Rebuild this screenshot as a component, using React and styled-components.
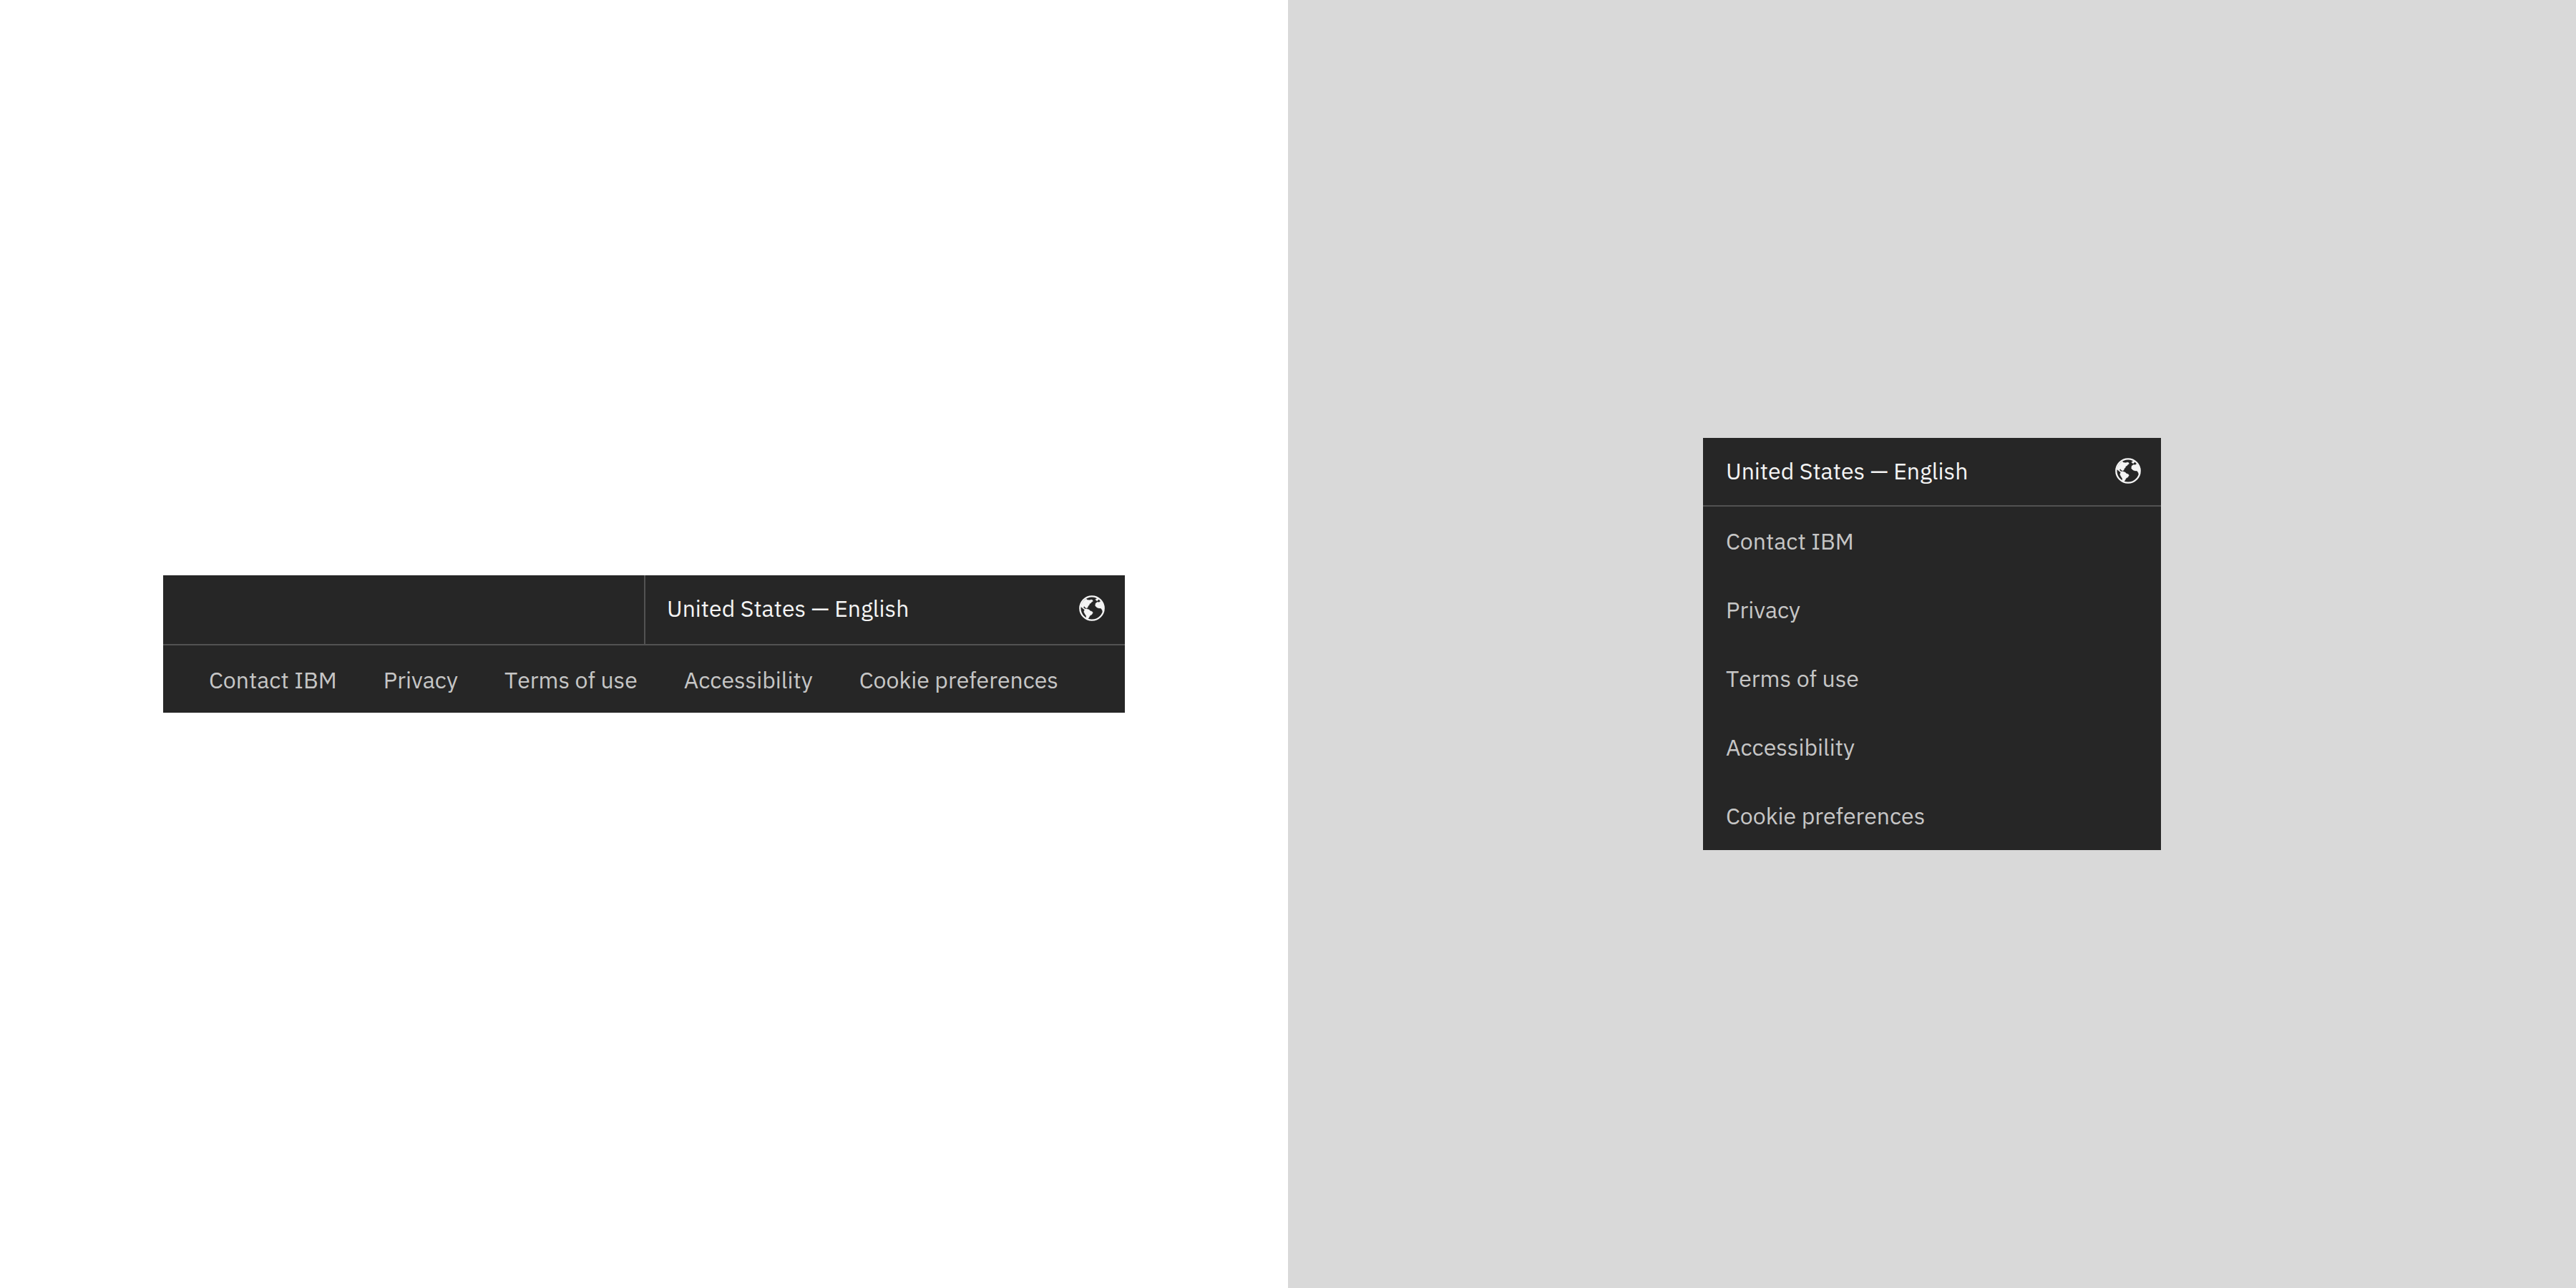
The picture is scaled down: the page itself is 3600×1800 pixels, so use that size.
import React from "react";
import styled, { createGlobalStyle } from "styled-components";

const GlobalStyle = createGlobalStyle`
  *, *::before, *::after { box-sizing: border-box; }
  body {
    margin: 0;
    font-family: "IBM Plex Sans", Roboto, sans-serif;
    font-size: 32px;
    line-height: 38px;
    font-kerning: none;
  }
`;

const Page = styled.main`
  display: grid;
  grid-template-columns: 1fr 1fr;
  min-height: 100vh;
`;

const Stage = styled.section`
  display: flex;
  align-items: center;
  justify-content: center;
  background: ${(p) => (p.$shaded ? "#d9d9d9" : "#ffffff")};
`;

const Footer = styled.footer`
  width: 100%;
  max-width: ${(p) => p.$maxWidth};
  background: #262626;
`;

const LocaleBar = styled.div`
  display: grid;
  grid-template-columns: ${(p) => (p.$split ? "1fr 1fr" : "1fr")};
  border-bottom: 2px solid #525252;
`;

const LocaleCell = styled.div`
  grid-column: -2 / -1;
  ${(p) => p.$divided && "border-left: 2px solid #525252;"}
`;

const LocaleButton = styled.button`
  display: flex;
  align-items: center;
  justify-content: space-between;
  width: 100%;
  height: ${(p) => (p.$tall ? "96px" : "94px")};
  padding: ${(p) => (p.$tall ? "0 28px 4px 30px" : "0 28px 2px 32px")};
  border: 0;
  background: transparent;
  color: #f4f4f4;
  font: inherit;
  font-kerning: none;
  text-align: left;
  cursor: pointer;
`;

const GlobeIcon = styled.svg`
  flex: none;
  width: 36px;
  height: 36px;
`;

const LinkList = styled.ul`
  display: flex;
  flex-direction: ${(p) => (p.$inline ? "row" : "column")};
  gap: ${(p) => (p.$inline ? "0 65px" : "0")};
  margin: 0;
  padding: ${(p) => (p.$inline ? "0 64px" : "0 32px")};
  list-style: none;
`;

const LegalLink = styled.a`
  display: block;
  padding: ${(p) => (p.$inline ? "29px 0 27px" : "29px 0")};
  color: #c6c6c6;
  text-decoration: none;
  white-space: nowrap;
`;

const links = ["Contact IBM", "Privacy", "Terms of use", "Accessibility", "Cookie preferences"];

function Globe() {
  return (
    <GlobeIcon viewBox="0 0 108 108" aria-hidden="true">
      <circle cx="54" cy="54" r="50" fill="none" stroke="#f4f4f4" strokeWidth="7" />
      <g fill="#f4f4f4" stroke="#f4f4f4" strokeWidth="1" strokeLinejoin="round">
        <path d="M8 41C13 29 20 20 30 14L34 19L43 20L52 18L57 20L58 25L53 28L49 33L44 35L43 40L38 45L36 51L31 54L25 50L22 46L18 50L22 55L28 58L25 61L18 57L12 51L7 49Z" />
        <path d="M24 58L31 56L42 60L47 65L55 68L58 73L53 81L46 85L42 92L36 101L29 98L30 86L25 79L20 69Z" />
        <path d="M104 50L103 63L99 68L96 60L91 54L83 54L75 51L68 44L69 34L77 28L84 29L89 25L96 29Z" />
        <path d="M68 18L76 12L84 14L79 20L75 24L72 20Z" />
      </g>
    </GlobeIcon>
  );
}

function LegalFooter({ inline, maxWidth }) {
  return (
    <Footer $maxWidth={maxWidth}>
      <LocaleBar $split={inline}>
        <LocaleCell $divided={inline}>
          <LocaleButton type="button" $tall={inline}>
            United States — English
            <Globe />
          </LocaleButton>
        </LocaleCell>
      </LocaleBar>
      <nav aria-label="Legal">
        <LinkList $inline={inline}>
          {links.map((label) => (
            <li key={label}>
              <LegalLink href="#" $inline={inline}>{label}</LegalLink>
            </li>
          ))}
        </LinkList>
      </nav>
    </Footer>
  );
}

export default function App() {
  return (
    <>
      <GlobalStyle />
      <Page>
        <Stage>
          <LegalFooter inline maxWidth="1344px" />
        </Stage>
        <Stage $shaded>
          <LegalFooter maxWidth="640px" />
        </Stage>
      </Page>
    </>
  );
}
